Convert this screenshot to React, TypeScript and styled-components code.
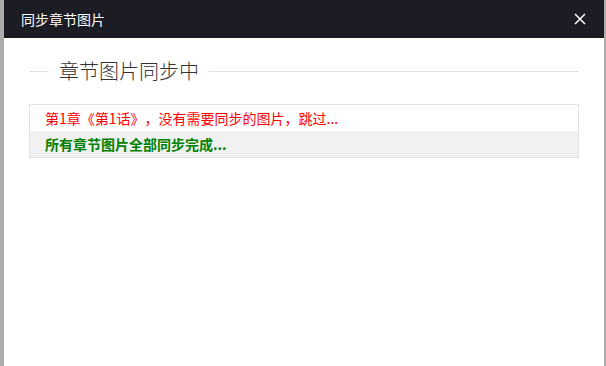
import React from "react";
import styled, { createGlobalStyle } from "styled-components";

const GlobalStyle = createGlobalStyle`
  html, body {
    margin: 0;
    padding: 0;
    background: #acacac;
    font-family: "Noto Sans CJK SC", "Liberation Sans", sans-serif;
  }
`;

const Dialog = styled.div`
  margin-left: 4px;
  width: 600px;
  height: 366px;
  background: #fff;
  display: flex;
  flex-direction: column;
`;

const Header = styled.div`
  height: 38px;
  background: #1b1c24;
  display: flex;
  align-items: center;
  justify-content: space-between;
  padding: 0 17px 0 17px;
  box-sizing: border-box;
`;

const Title = styled.span`
  color: #fff;
  font-size: 14px;
`;

const Close = styled.button`
  width: 14px;
  height: 14px;
  padding: 0;
  border: none;
  background: none;
  display: flex;
  align-items: center;
  justify-content: center;
  cursor: pointer;
`;

const Body = styled.div`
  padding: 21px 25px 0;
`;

const Field = styled.fieldset`
  margin: 0;
  padding: 0;
  border: none;
  border-top: 1px solid #e2e2e2;
  min-width: 0;
`;

const Legend = styled.legend`
  margin-left: 20px;
  padding: 0 10px;
  font-size: 20px;
  font-weight: 300;
  color: #333;
  line-height: 24px;
`;

const Log = styled.div`
  margin-top: 21px;
  border: 1px solid #e2e2e2;
`;

const Line = styled.div<{ $tone: "warn" | "done" }>`
  height: 26px;
  line-height: 26px;
  padding-left: 15px;
  font-size: 14px;
  text-spacing-trim: space-all;
  color: ${(p) => (p.$tone === "warn" ? "#ff0000" : "#008000")};
  font-weight: ${(p) => (p.$tone === "done" ? 700 : 400)};
  background: ${(p) => (p.$tone === "done" ? "#f1f1f1" : "#fff")};
`;

export default function App() {
  return (
    <>
      <GlobalStyle />
      <Dialog>
        <Header>
          <Title>同步章节图片</Title>
          <Close aria-label="关闭">
            <svg width="12" height="12" viewBox="0 0 12 12">
              <path d="M1 1L11 11M11 1L1 11" stroke="#fff" strokeWidth="1.5" />
            </svg>
          </Close>
        </Header>
        <Body>
          <Field>
            <Legend>章节图片同步中</Legend>
          </Field>
          <Log>
            <Line $tone="warn">第1章《第1话》，没有需要同步的图片，跳过...</Line>
            <Line $tone="done">所有章节图片全部同步完成...</Line>
          </Log>
        </Body>
      </Dialog>
    </>
  );
}
